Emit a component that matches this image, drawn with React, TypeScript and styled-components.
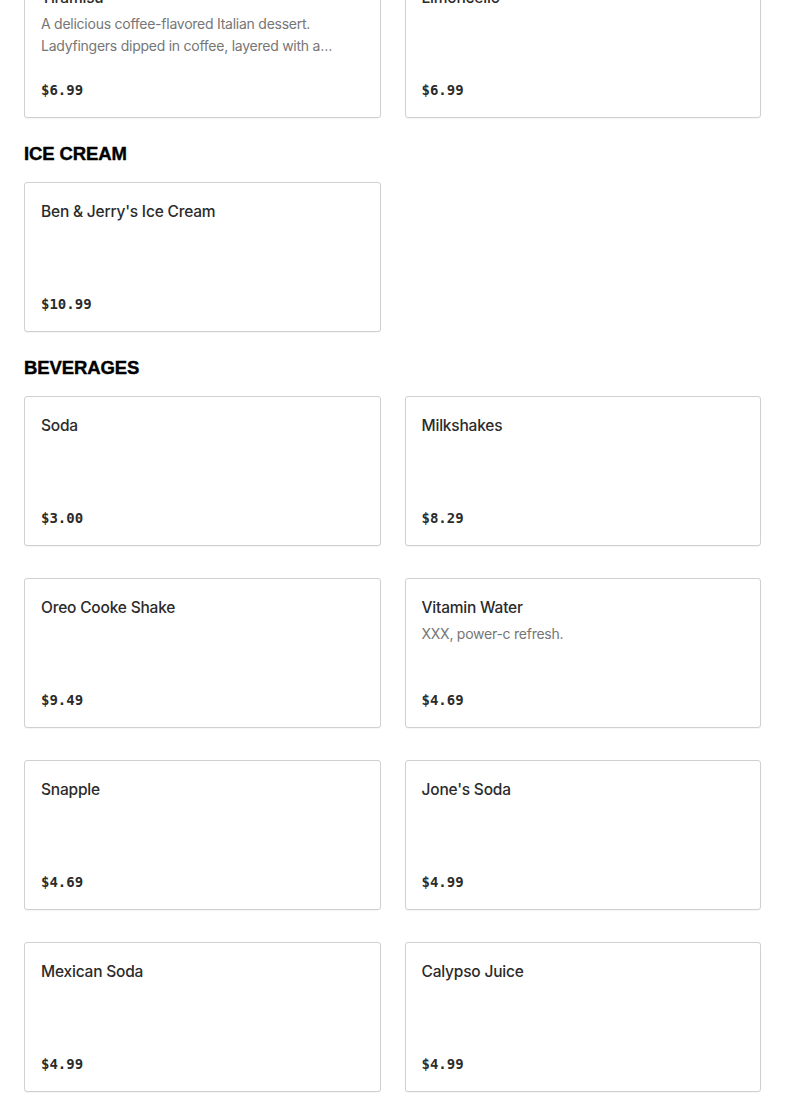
import * as React from 'react'
import styled, { createGlobalStyle } from 'styled-components'

const GlobalStyle = createGlobalStyle`
  html, body {
    margin: 0;
    padding: 0;
    background: #fff;
  }
  body {
    font-family: Inter, "Liberation Sans", sans-serif;
    color: #2b2b2b;
  }
`

// page is shown scrolled a little past the first row's top
const Page = styled.div`
  margin-top: -32px;
  padding: 0 24px 24px;
`
const Section = styled.section`
  display: flex;
  flex-direction: column;
`
const Heading = styled.h2`
  margin: 22px 0 14px;
  font-family: "Liberation Sans", Arial, sans-serif;
  font-weight: 700;
  font-size: 18.5px;
  line-height: 28px;
  color: #000;
  letter-spacing: -0.1px;
  -webkit-text-stroke: 0.4px #000;
`
const Grid = styled.div`
  display: grid;
  grid-template-columns: 1fr 1fr;
  column-gap: 24px;
  row-gap: 32px;
`
const Card = styled.div`
  display: flex;
  flex-direction: column;
  min-height: 150px;
  box-sizing: border-box;
  padding: 16px;
  border: 1px solid #d0d0d0;
  border-radius: 3px;
  background: #fff;
  box-shadow: 0 1px 1px rgba(0, 0, 0, 0.04);
`
const Title = styled.div`
  font-size: 15.5px;
  font-weight: 500;
  line-height: 25px;
  letter-spacing: -0.2px;
  color: #2b2b2b;
`
const Desc = styled.div`
  margin-top: 3px;
  font-size: 14px;
  line-height: 22px;
  letter-spacing: -0.25px;
  color: #767676;
  display: -webkit-box;
  -webkit-line-clamp: 2;
  -webkit-box-orient: vertical;
  overflow: hidden;
`
const Price = styled.div`
  margin-top: auto;
  font-family: "DejaVu Sans Mono", "Liberation Mono", monospace;
  font-weight: 700;
  font-size: 14px;
  line-height: 22px;
  color: #2b2b2b;
`

interface IItem {
  name: string
  desc?: string
  price: string
}

const sections: { title?: string; items: IItem[] }[] = [
  {
    items: [
      {
        name: 'Tiramisu',
        desc: 'A delicious coffee-flavored Italian dessert. Ladyfingers dipped in coffee, layered with a whipped mixture of eggs, sugar and mascarpone cheese.',
        price: '$6.99',
      },
      { name: 'Limoncello', price: '$6.99' },
    ],
  },
  {
    title: 'ICE CREAM',
    items: [{ name: "Ben & Jerry's Ice Cream", price: '$10.99' }],
  },
  {
    title: 'BEVERAGES',
    items: [
      { name: 'Soda', price: '$3.00' },
      { name: 'Milkshakes', price: '$8.29' },
      { name: 'Oreo Cooke Shake', price: '$9.49' },
      { name: 'Vitamin Water', desc: 'XXX, power-c refresh.', price: '$4.69' },
      { name: 'Snapple', price: '$4.69' },
      { name: "Jone's Soda", price: '$4.99' },
      { name: 'Mexican Soda', price: '$4.99' },
      { name: 'Calypso Juice', price: '$4.99' },
    ],
  },
]

export default function App(): JSX.Element {
  return (
    <>
      <GlobalStyle />
      <Page>
        {sections.map((section, i) => (
          <Section key={i}>
            {section.title && <Heading>{section.title}</Heading>}
            <Grid>
              {section.items.map((item) => (
                <Card key={item.name}>
                  <Title>{item.name}</Title>
                  {item.desc && <Desc>{item.desc}</Desc>}
                  <Price>{item.price}</Price>
                </Card>
              ))}
            </Grid>
          </Section>
        ))}
      </Page>
    </>
  )
}
